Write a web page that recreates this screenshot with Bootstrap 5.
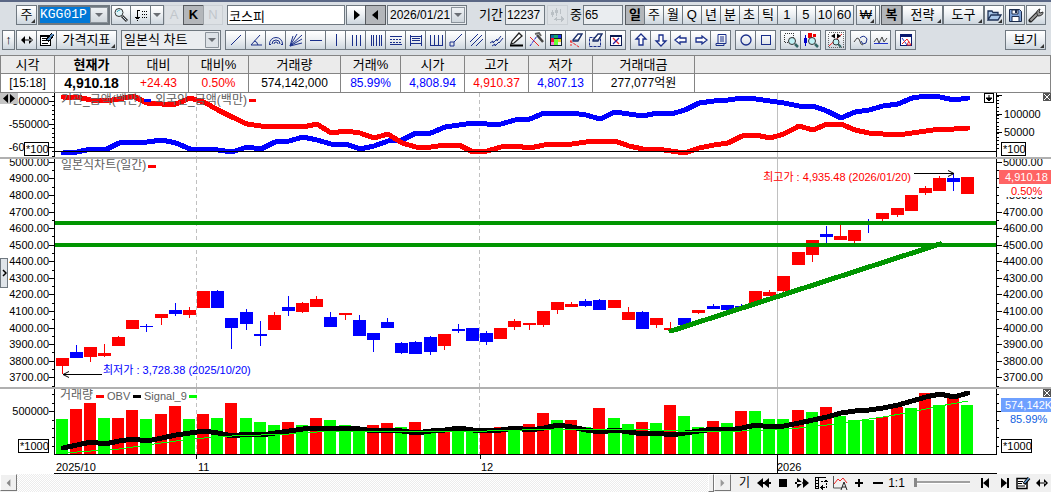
<!DOCTYPE html>
<html lang="ko">
<head>
<meta charset="utf-8">
<meta name="viewport" content="width=device-width, initial-scale=1">
<title>코스피 차트</title>
<link href="https://cdn.jsdelivr.net/npm/bootstrap@5.3.0/dist/css/bootstrap.min.css" rel="stylesheet">
<style>
body{font-family:"Liberation Sans","Noto Sans CJK KR",sans-serif;font-size:12px;line-height:16px;color:#000;background:#fff;overflow-x:hidden}
.tools{background:#dadfe4;border-top:2px solid #5a6785;padding:3px 5px 5px 0}
.bar{height:20px}
.bar + .bar{margin-top:5px}
.bar-a{padding-left:16px}
.bar-b{padding-left:2px}
.s1{margin-left:1px}.s2{margin-left:2px}.s4{margin-left:4px}.s12{margin-left:12px}
.grp{display:flex;flex:none}
.grp > * + *{margin-left:-1px}
.tb{--bs-btn-padding-x:0;--bs-btn-padding-y:0;--bs-btn-font-size:13px;--bs-btn-line-height:18px;--bs-btn-border-radius:0;--bs-btn-color:#000;--bs-btn-border-color:#6f7880;--bs-btn-hover-border-color:#6f7880;
 width:21px;height:20px;flex:none;display:flex;align-items:center;justify-content:center;position:relative;background:linear-gradient(#fff 5%,#eef1f4 45%,#cdd6de);white-space:nowrap}
.tb.slim{width:20px}.tb.wide{width:41px}.tb.ind{width:61px}.tb.nar{width:14px}.tb.sliver{width:5px}.tb.up{width:13px}
.tb.on{background:#b3b6ba;border-color:#55595e;font-weight:700}
.tb.dim{background:#dfe3e7;border-color:#c3c8cd;color:#b4b9be;--bs-btn-color:#b4b9be}
.tb.more::after{content:"";position:absolute;right:1px;bottom:1px;border:2px solid #333;border-top-color:transparent;border-left-color:transparent}
.tb svg,.ft svg{width:16px;height:16px;display:block}
.tx{height:20px;border:1px solid #6f7880;border-radius:0;padding:0 1px;font-size:12px;line-height:18px;min-height:0;flex:none;color:#000}
.tx.form-control:focus{box-shadow:none}
.soft{background:#eaedf0}
.name-in{width:118px;font-size:13px}
.num-in{width:40px}
.combo{border:2px solid #6f7880;height:20px;width:72px;background:#fff;flex:none;display:flex}
.combo input{width:50px;border:0;padding:0;background:#0078d7;color:#fff;font:13px/16px "Liberation Mono",monospace;outline:0}
.combo button,.arrow{border:1px solid #8b939b;background:linear-gradient(#eef1f4,#cfd6dc);padding:0;flex:1;display:flex;align-items:center;justify-content:center}
.tri{border:4px solid transparent;border-top-color:#6a6e74;border-bottom:0}
.date{width:80px;border:1px solid #6f7880;background:#eaedf0;height:20px;flex:none;display:flex;padding:1px}
.date input{width:62px;border:0;padding:0 1px;background:transparent;font-size:12px;line-height:16px}
.kind{width:100px;border:1px solid #6f7880;height:20px;background:#eaedf0 url("data:image/svg+xml,%3Csvg xmlns='http://www.w3.org/2000/svg' width='14' height='16'%3E%3Cpath d='M.5.5h13v15H.5z' fill='%23dde2e7' stroke='%238b939b'/%3E%3Cpath d='M3 6h8l-4 4z' fill='%236a6e74'/%3E%3C/svg%3E") no-repeat right 1px center;border-radius:0;padding:0 16px 0 2px;font-size:13px;line-height:18px;appearance:none;word-break:keep-all}
.lb{font-size:13px;line-height:20px;flex:none}
.quote{table-layout:fixed;width:100%;margin:0;border-collapse:collapse;text-align:center}
.quote th,.quote td{border:1px solid #848484;padding:0;height:18px;line-height:17px;white-space:nowrap;overflow:hidden}
.quote th{background:#ebebeb;font-weight:400;font-size:13px}
.quote td{height:19px;font-size:12px;background:#fff}
.quote .now{font-weight:700}
.quote td.now{font-size:14px}
.rd{color:#f00}.bl{color:#00f}
.pane{display:block;width:100%;overflow:hidden}
.pane text{font-size:11px}
.p1{height:64px}.p2{height:228px}.p3{height:85px}
.split{height:2px;background:#b0b0b0}
.stack{position:relative}
.handle{position:absolute;left:0;top:165px;width:8px;height:30px;border:1px solid #6f7880;background:#dfe4e9;padding:0;display:flex;align-items:center;justify-content:center}
.lr{position:absolute;left:0;top:0;width:18px;height:11px;background:#c4c4c4;border:0;padding:0;display:flex;align-items:center;justify-content:center}
.ft{height:18px;background:#f0f0f0}
.scroll-x{flex:1;background:repeating-conic-gradient(#fff 0 25%,#ececec 0 50%) 0 0/2px 2px}
.sb{width:17px;height:17px;border:1px solid;border-color:#fff #777 #777 #fff;background:#f0f0f0;padding:0;display:flex;align-items:center;justify-content:center}
.thumb{width:6px;border:1px solid;border-color:#fff #777 #777 #fff}
.ft .ib{border:0;background:none;padding:0;width:19px;height:18px;display:flex;align-items:center;justify-content:center;font-size:12px;color:#000}
.range{appearance:none;background:transparent;width:56px;height:16px;margin:0 5px 0 8px}
.range::-webkit-slider-runnable-track{height:3px;background:#a0a0a0;border-bottom:1px solid #fff}
.range::-webkit-slider-thumb{appearance:none;width:3px;height:9px;margin-top:-3px;background:#888}
</style>
</head>
<body>
<header class="tools">
<div class="bar bar-a d-flex">
 <button class="btn tb more">주</button>
 <div class="combo s1"><input id="code" aria-label="종목코드" value="KGG01P"><button aria-label="코드 목록"><span class="tri"></span></button></div>
 <div class="grp s1">
  <button class="btn tb slim" aria-label="찾기"><svg viewBox="0 0 16 16"><circle cx="6" cy="5.500" r="4" fill="#dff3f8" stroke="#333"/><path d="M4 5q1-2 3-2" stroke="#3ab" fill="none"/><path d="M9 9l5 5" stroke="#333" stroke-width="3"/><path d="M9.500 9.500l4 4" stroke="#cde"/></svg></button>
  <button class="btn tb" aria-label="정렬"><svg viewBox="0 0 16 16" shape-rendering="crispEdges"><path d="M7 3.500H4.500V12M2 10.500h5M3 11.500h3M4 13h1" stroke="#000" fill="none"/><path d="M9 4.500h1m1 0h4M9 7.500h1m1 0h4M9 10.500h1m1 0h4" stroke="#000" stroke-dasharray="1 1"/></svg></button>
  <button class="btn tb nar" aria-label="정렬 목록"><span class="tri"></span></button>
 </div>
 <div class="grp"><button class="btn tb dim slim" disabled>A</button><button class="btn tb on">K</button><button class="btn tb dim slim" disabled>N</button></div>
 <input class="form-control tx name-in s4" aria-label="종목명" value="코스피">
 <div class="grp s1"><button class="btn tb slim" aria-label="다음"><svg viewBox="0 0 16 16"><path d="M6 3v10l6-5z"/></svg></button><button class="btn tb on" aria-label="이전"><svg viewBox="0 0 16 16"><path d="M10 3v10l-6-5z"/></svg></button></div>
 <div class="date s1"><input aria-label="날짜" value="2026/01/21"><button class="arrow" aria-label="달력"><span class="tri"></span></button></div>
 <label class="lb s12" for="span">기간</label>
 <input class="form-control tx soft num-in s2" id="span" value="12237">
 <button class="btn tb dim s2" disabled aria-label="조정"><svg viewBox="0 0 16 16" shape-rendering="crispEdges"><path d="M3.500 3v7M7.500 1v8M11.500 2v5M5 12.500h10" stroke="#aab0b5"/><path d="M2 5h3v3H2zM6 3h3v3H6zM5 12l3-3v6zM15 12l-3-3v6z" fill="#aab0b5"/></svg></button>
 <label class="lb s2" for="cnt">중</label>
 <input class="form-control tx soft num-in s1" id="cnt" value="65">
 <div class="grp s2">
  <button class="btn tb slim on">일</button><button class="btn tb slim">주</button><button class="btn tb slim">월</button><button class="btn tb slim">Q</button><button class="btn tb slim">년</button><button class="btn tb slim">분</button><button class="btn tb slim">초</button><button class="btn tb slim">틱</button><button class="btn tb slim">1</button><button class="btn tb slim">5</button><button class="btn tb slim">10</button><button class="btn tb slim">60</button>
 </div>
 <div class="grp s2"><button class="btn tb slim more">₩</button><button class="btn tb sliver" aria-label="구분"></button></div>
 <div class="d-flex ms-auto">
  <button class="btn tb on">복</button><button class="btn tb wide more">전략</button><button class="btn tb wide more">도구</button>
  <button class="btn tb slim more" aria-label="열기"><svg viewBox="0 0 16 16"><path d="M2 13V4h4l1 1.500h5V8M2 13l3-5h10l-3 5z" fill="#a9c6e8" stroke="#1d3156" stroke-width="1.300"/></svg></button>
  <button class="btn tb slim s1" aria-label="저장"><svg viewBox="0 0 16 16"><path d="M2.500 2.500h10l2 2v10h-12z" fill="#7fa3d8" stroke="#1d2c4c"/><path d="M5 3h6v4H5zM5 9.500h7v5H5z" fill="#fff" stroke="#1d2c4c"/><path d="M8 3h2v3H8z" fill="#1d2c4c"/></svg></button>
  <button class="btn tb slim s1" aria-label="설정"><svg viewBox="0 0 16 16"><path d="M2.500 13.500L10 6" stroke="#222" stroke-width="4" stroke-linecap="round"/><path d="M2.500 13.500L10 6" stroke="#999" stroke-width="2"/><path d="M9 7q-1-4 3-5l-1 3 1 1 3-1q0 4-5 4z" fill="#999" stroke="#333"/></svg></button>
 </div>
</div>

<div class="bar bar-b d-flex">
 <button class="btn tb up">↑</button>
 <div class="grp s1">
  <button class="btn tb" aria-label="좌우"><svg viewBox="0 0 16 16"><path d="M6 4v8L2 8zM10 4v8l4-4zM3 7.500h10v1H3z"/></svg></button>
  <button class="btn tb" aria-label="편집"><svg viewBox="0 0 16 16" shape-rendering="crispEdges"><path d="M1.500 3.500h10v10h-10z" fill="#fff" stroke="#000"/><path d="M1 3.500h9" stroke="#000" stroke-width="2"/><path d="M3 6.500h5M3 8.500h4M3 11.500h6" stroke="#000"/><path d="M14 2L8 9" stroke="#000" stroke-width="4"/><path d="M14 2L9 8" stroke="#58b" stroke-width="2"/></svg></button>
  <button class="btn tb ind more">가격지표</button>
 </div>
 <select class="kind s4" aria-label="차트 종류"><option>일본식 차트</option></select>
 <div class="grp s4" id="draw"></div>
 <div class="grp s4" id="arrows"></div>
 <div class="grp s4" id="shapes"></div>
 <div class="grp s4" id="zooms"></div>
 <div class="grp s4" id="fit"></div>
 <div class="grp s4" id="waves"></div>
 <div class="grp s4" id="clear"></div>
 <button class="btn tb wide more ms-auto">보기</button>
</div>
</header>

<table class="quote">
<colgroup><col style="width:54px"><col style="width:74px"><col style="width:60px"><col style="width:60px"><col style="width:92px"><col style="width:60px"><col style="width:64px"><col style="width:64px"><col style="width:64px"><col style="width:102px"><col></colgroup>
<thead><tr><th>시각</th><th class="now">현재가</th><th>대비</th><th>대비%</th><th>거래량</th><th>거래%</th><th>시가</th><th>고가</th><th>저가</th><th>거래대금</th><th></th></tr></thead>
<tbody><tr><td>[15:18]</td><td class="now">4,910.18</td><td class="rd">+24.43</td><td class="rd">0.50%</td><td>574,142,000</td><td class="bl">85.99%</td><td class="bl">4,808.94</td><td class="rd">4,910.37</td><td class="bl">4,807.13</td><td>277,077억원</td><td></td></tr></tbody>
</table>

<main class="stack">
 <svg class="pane p1" id="flow"></svg>
 <div class="split"></div>
 <svg class="pane p2" id="price"></svg>
 <div class="split"></div>
 <svg class="pane p3" id="volume"></svg>
 <button class="lr" aria-label="폭 조절"><svg width="14" height="9" viewBox="0 0 14 9"><path d="M6 0v9L1 4.500zM8 0v9l5-4.500z"/></svg></button>
 <button class="handle" aria-label="펼치기"><svg width="5" height="8" viewBox="0 0 5 8"><path d="M1 1l3 3-3 3" fill="none" stroke="#000" stroke-width="1.500"/></svg></button>
</main>

<footer class="ft d-flex">
 <button class="sb" aria-label="왼쪽으로"><svg viewBox="0 0 16 16"><path d="M10 4v8L6 8z" fill="#888"/></svg></button>
 <div class="scroll-x"></div>
 <div class="thumb"></div>
 <button class="sb" aria-label="오른쪽으로"><svg viewBox="0 0 16 16"><path d="M6 4v8l4-4z" fill="#999"/></svg></button>
 <div class="d-flex ms-1">
  <button class="ib">기</button>
  <button class="ib" aria-label="뒤로"><svg viewBox="0 0 16 16"><path d="M7 3v10L1 8zM13 3v10L7 8zM7 7h8v2H7z"/></svg></button>
  <button class="ib" aria-label="정지"><svg viewBox="0 0 16 16"><path d="M4 4h8v8H4z"/></svg></button>
  <button class="ib" aria-label="앞으로"><svg viewBox="0 0 16 16"><path d="M9 3v10l6-5zM3 3v10l6-5zM1 7h8v2H1z"/></svg></button>
  <button class="ib" aria-label="축 이동"><svg viewBox="0 0 16 16" shape-rendering="crispEdges"><path d="M2.500 2v12M5.500 2v12M2 2.500h11M2 5.500h4M2 8.500h4M2 11.500h4M2 13.500h4" stroke="#000" fill="none"/><path d="M8 6.500h5v6H8" fill="none" stroke="#000" stroke-dasharray="2 1"/><path d="M10 10v5l-3-2.500zM10.500 7h5L13 4z"/></svg></button>
  <button class="ib" aria-label="자동 추세"><svg viewBox="0 0 16 16"><path d="M1.500 1v12H10" fill="none" stroke="#555"/><path d="M2 9l4-5 2 2 3-3 4 5" fill="none" stroke="#e22"/><path d="M9 15l3-8 3 8M10 12h4" fill="none" stroke="#222"/></svg></button>
  <button class="ib" aria-label="확대"><svg viewBox="0 0 16 16"><path d="M4 7h8v2H4zM7 4h2v8H7z"/></svg></button>
  <button class="ib" aria-label="축소"><svg viewBox="0 0 16 16"><path d="M3 7h10v2H3z"/></svg></button>
  <button class="ib">1:1</button>
  <input class="range" type="range" min="0" max="100" value="0" aria-label="배율">
 </div>
 <div class="d-flex">
  <button class="ib" aria-label="처음"><svg viewBox="0 0 16 16"><path d="M4 3h2v10H4zM12 3v10L6 8z"/></svg></button>
  <button class="ib" aria-label="끝"><svg viewBox="0 0 16 16"><path d="M11 3h2v10h-2zM5 3v10l6-5z"/></svg></button>
  <button class="ib" aria-label="편집"><svg viewBox="0 0 16 16"><path d="M2 3.500h10v10H2z" fill="#fff" stroke="#000" stroke-width="1.500"/><path d="M3 6.500h5M3 8.500h4M3 11h7" stroke="#000"/><path d="M14 3L9 9" stroke="#000" stroke-width="3.500"/><path d="M14 3L9.500 8" stroke="#69c" stroke-width="1.500"/></svg></button>
  <button class="ib" aria-label="너비"><svg viewBox="0 0 16 16"><path d="M6 4v8L2 8zM10 4v8l4-4zM4 7.500h8v1H4z"/></svg></button>
 </div>
</footer>

<script src="https://cdn.jsdelivr.net/npm/bootstrap@5.3.0/dist/js/bootstrap.bundle.min.js"></script>
<script>
// Toolbar glyphs, one list per button group: [label, svg body]
const N='fill="none" stroke="#1a2f8a"', C='shape-rendering="crispEdges"';
const lens='<circle cx="9" cy="9" r="3.500" fill="#bff0f4" stroke="#333"/><path d="M12 12l3 3" stroke="#366" stroke-width="2.500"/>';
const eraser='<path d="M5 8l5-6h4l-4 7H5z" fill="#fff" stroke="#1a2f6a" stroke-width="1.300"/><path d="M5 8h5l4-6" fill="none" stroke="#1a2f6a"/>';
const sets={
 draw:[
 ['추세선',`<path d="M3 13L13 3" ${N}/>`],
 ['각도선',`<path d="M12 3L3 13H14M6 9q3 0 4 4" ${N}/>`],
 ['원호',`<path d="M1.500 12a6.500 6.500 0 0 1 13 0M4 12a4 4 0 0 1 8 0M6 12a2 2 0 0 1 4 0M1 12.500h2M13 12.500h2" ${N}/>`],
 ['부채선',`<path d="M2 14L5 4M2 14L9 2M2 14L14 3M2 14L14 7M2 14L14 11" ${N}/>`],
 ['수평선',`<path d="M2 8.500h12" ${N} ${C}/>`],
 ['수직선',`<path d="M8.500 2v12" ${N} ${C}/>`],
 ['삼등분',`<path d="M4.500 3v11M8.500 3v11M12.500 3v11" ${N} ${C}/>`],
 ['시간대',`<path d="M3.500 3v11M5.500 3v11M8.500 3v11M11.500 3v11M13.500 3v11" ${N} ${C}/>`],
 ['되돌림',`<path d="M2 4.500h12M2 12.500h12" ${N} ${C}/><path d="M2 7.500h12M2 10.500h12" ${N} ${C} stroke-dasharray="2 1"/>`],
 ['구간',`<path d="M2.500 3v11M13.500 3v11M3 4.500h10M4 6.500h8M4 8.500h8M3 11.500h10" ${N} ${C}/>`],
 ['주기',`<path d="M2.500 3v10M6.500 3v10M10.500 3v10M14.500 3v10M2 13.500h13" ${N} ${C}/>`],
 ['점선분',`<path d="M6 10l8-8M2 10h4v4H2z" ${N}/>`],
 ['평행선',`<path d="M2 10l8-8M3 14L14 3M8 14l7-7" ${N}/>`],
 ['물결선',`<path d="M2 11l3-2v2l4-4v2l4-5M4 14l3-2v2l4-4v1l4-5" ${N}/>`],
 ['연필',`<path d="M3 12l1-3 7-8 3 3-8 7z" fill="#fff" stroke="#222" stroke-width="1.300"/><path d="M2 13.500h13" stroke="#000" stroke-width="2"/>`],
 ['도구',`<path d="M2 5l9 9" stroke="#e22"/><path d="M2 14L9 4" stroke="#22c" stroke-dasharray="3 1"/><path d="M9 3l6 7" stroke="#444" stroke-width="2.500"/><path d="M7 2l4-1 2 3" stroke="#666" stroke-width="2" fill="none"/>`],
 ['색상',`<g ${C}><path d="M2 2h12v12H2z" fill="#123"/><path d="M3 3h3v3H3z" fill="#16a"/><path d="M6 3h4v3H6z" fill="#1a6"/><path d="M10 3h3v3h-3z" fill="#23e"/><path d="M3 6h3v4H3z" fill="#e13"/><path d="M6 7h4v6H6z" fill="#6f3"/><path d="M10 7h3v3h-3z" fill="#ec3"/><path d="M3 10h3v3H3z" fill="#f7d"/><path d="M10 10h3v3h-3z" fill="#eee"/></g>`],
 ['지우개',`${eraser}<path d="M2 9l9 6M3 8v6" stroke="#e22" stroke-dasharray="3 1"/>`],
 ['영역삭제',`<path d="M1.500 5.500h11v9h-11z" ${N} stroke-dasharray="3 1"/>${eraser}`],
 ['모두삭제',`<g ${C}><path d="M2.500 3.500h11v10h-11z" fill="#fff" stroke="#0a1a50"/><path d="M2 3.500h12" stroke="#0a1a50" stroke-width="2"/></g><path d="M5 6l6 6" stroke="#e22" stroke-width="1.300"/><path d="M5 12l6-6" stroke="#22a" stroke-width="1.300"/>`]],
 arrows:[
 ['위',`<path d="M8 2l5 5h-3v6H6V7H3z" fill="#fff" stroke="#1a2f8a" stroke-width="1.300"/>`],
 ['아래',`<path d="M8 14l5-5h-3V3H6v6H3z" fill="#fff" stroke="#1a2f8a" stroke-width="1.300"/>`],
 ['왼쪽',`<path d="M2 8l5-4v2h6v4H7v2z" fill="#fff" stroke="#1a2f8a" stroke-width="1.300"/>`],
 ['오른쪽',`<path d="M14 8L9 4v2H3v4h6v2z" fill="#fff" stroke="#1a2f8a" stroke-width="1.300"/>`],
 ['메모',`<path d="M5 2.500h8v9H5zM3 13.500h8v-2H3zM7 5h4M7 7h4M7 9h4" ${N}/>`]],
 shapes:[['원',`<circle cx="8" cy="8" r="5" ${N} stroke-width="1.300"/>`],['사각형',`<path d="M3.500 3.500h9v9h-9z" ${N} ${C}/>`]],
 zooms:[['영역확대',`<path d="M1.500 1.500h9v9h-9z" fill="none" stroke="#333" stroke-dasharray="1 1" ${C}/>${lens}`],['봉확대',`<g ${C}><path d="M1 6h3v5H1zM2 3h1v11H2z" fill="#00c"/><path d="M5 1h4v5H5zM10 2h3v3h-3z" fill="#e00"/></g>${lens}`]],
 fit:[['맞춤',`<path d="M.500.500h15v15H.500z" fill="none" stroke="#666" stroke-dasharray="1 1" ${C}/><path d="M1 14L14 2" stroke="#e22"/><path d="M7 1.500v5L3 4zM9 1.500v5L13 4z"/><circle cx="8" cy="10" r="3" fill="#bff0f4" stroke="#333"/><path d="M10 12l3 3" stroke="#366" stroke-width="2"/>`]],
 waves:[['파동',`<path d="M1 10l3-4 2 1 2 5 2 1" fill="none" stroke="#444"/><path d="M7 6q4-4 7 1l-1 4-3 1-2-3" ${N}/>`],['진동',`<path d="M1 10l3-4 2 5 3-6 2 5 3-4" fill="none" stroke="#444"/><path d="M1 11.500h14" stroke="#23c"/>`]],
 clear:[['차트',`<g ${C}><path d="M2.500 2.500h11v11h-11z" fill="#fff" stroke="#0a1a70"/><path d="M2 3.500h12" stroke="#0a1a70" stroke-width="3"/></g><path d="M4 6l5 7" stroke="#23c"/><path d="M4 12l5-5 4 6H9l2-4" fill="none" stroke="#e22"/>`]]
};
for(const id in sets) document.getElementById(id).innerHTML=sets[id].map(([t,g])=>`<button class="btn tb" aria-label="${t}"><svg viewBox="0 0 16 16">${g}</svg></button>`).join('');

// Sessions: colour, body top, body bottom, high, low (vertical positions on the shared scale)
const candles='r358,366,358,374 b352,358,345,358 r347,357,347,362 r353,356,344,357 r337,346,336,346 r320,329,320,329 b326,327,324,332 r314,318,314,325 b310,314,303,316 r310,315,307,318 r291,308,291,308 b291,308,290,308 b318,328,318,349 b312,324,309,330 b334,336,321,346 r315,330,312,330 b307,311,296,316 r303,312,302,313 r299,307,296,307 b317,327,312,327 r313,315,313,320 b320,336,315,336 b333,340,333,352 b322,328,318,328 b343,353,342,354 b342,354,341,354 b337,352,336,355 r334,346,334,350 b329,331,324,333 b328,341,328,341 b333,342,331,345 r328,339,328,339 r321,327,319,330 r323,325,323,330 r311,325,311,327 r302,310,302,314 r304,307,302,307 b301,306,299,307 b300,310,299,310 r300,308,300,308 r312,320,307,320 b312,329,311,329 r318,325,318,328 r328,330,322,330 b318,325,318,325 r310,313,310,314 b306,309,304,309 b305,310,305,310 b306,307,304,309 r291,304,291,304 r292,296,290,296 r276,291,276,292 r252,265,252,265 r240,255,240,262 b234,237,226,244 r236,240,225,240 r230,241,230,243 b222,225,219,233 r213,219,213,221 r208,215,208,217 r195,211,195,211 r188,193,186,195 r178,191,176,191 b178,182,174,191 r177,194,177,194'.split(' ').map(s=>[s[0],...s.slice(1).split(',').map(Number)]);
const vol='g419 r409 r403 g418 r418 r410 g419 r414 r406 g419 r414 g418 r403 g418 g422 g425 r422 g425 r418 g420 g425 g427 r425 r423 g427 r422 g431 r431 g430 g430 r428 r427 g431 r424 r413 g420 r420 g427 r408 g418 g424 r422 g423 r405 g416 g427 r421 g423 r411 g411 g419 g419 r410 g412 r407 g416 g420 g420 r417 r407 g408 r393 g405 r398 g405'.split(' ');
const inst=[153,152,149,150,143,142,142,140,143,149,149,150,152,147,149,142,141,137,140,144,144,149,146,141,140,133,133,127,125,123,124,124,120,119,113,113,113,115,119,112,114,116,113,114,110,103,101,100,98,99,101,103,106,106,111,118,112,110,106,104,98,96,97,100,98];
const frgn=[97,97,100,101,99,96,103,104,104,98,102,110,117,124,126,126,126,127,124,133,131,133,138,134,143,147,147,145,145,152,151,147,146,148,145,144,144,142,141,141,146,149,149,151,153,148,145,143,136,135,138,134,126,130,124,124,130,133,134,135,133,131,129,129,128];
const obv=[448,445,442,444,441,439,441,438,435,433,431,433,436,434,435,433,431,429,428,429,428,429,431,430,431,433,431,430,428,430,431,430,428,430,428,425,427,430,432,430,432,434,433,435,433,431,429,430,428,425,427,426,423,420,417,413,411,410,408,405,401,397,394,397,393];
const sig=[[0,453],[2,451],[4,449],[6,445],[8,441],[10,438],[12,436],[14,435],[16,434],[18,432],[20,431],[30,431],[35,429],[42,430],[45,432],[48,431],[50,430],[52,428],[54,425],[56,421],[58,417],[60,412],[62,406],[64,401]];
const RED='#f00',BLU='#00f',GRN='#0f0',DK='#009500';
const T=(x,y,s,f='#000',a='start',z=11)=>`<text x="${x}" y="${y}" fill="${f}" text-anchor="${a}" style="font-size:${z}px">${s}</text>`;
const R=(x,y,w,h,f)=>`<rect x="${x}" y="${y}" width="${w}" height="${h}" fill="${f}"/>`;
const boxed=(x,y,w,s)=>`<rect x="${x+.5}" y="${y+.5}" width="${w}" height="13" fill="#fff" stroke="#000"/>`+T(x+2,y+11,s);
const closer=(x,y)=>`<g>${R(x,y,8,8,'#555')}<path d="M${x+1} ${y+1}l6 6m0-6l-6 6" stroke="#fff"/></g>`;

function draw(){
 const W=document.querySelector('.stack').clientWidth, L=54, E=W-55, step=(E-L)/66.55;
 const X=i=>L+8.500+step*i, P=v=>Math.round(v);
 const line=(a,c,w)=>`<polyline points="${a.map((v,i)=>Array.isArray(v)?P(X(v[0]))+','+v[1]:P(X(i))+','+v).join(' ')}" fill="none" stroke="${c}" stroke-width="${w}" stroke-linecap="round" stroke-linejoin="round" shape-rendering="crispEdges"/>`;
 const months=(t,b)=>[9.5,29.5].map(i=>`<path d="M${P(X(i))-.5} ${t}V${b}" stroke="#c0c0c0" stroke-dasharray="4 3"/>`).join('')+R(P(X(50.5)),t,1,b-t,'#c0c0c0');
 const axes=(t,b)=>R(L,t,1,b-t,'#000')+R(E,t,1,b-t,'#000');
 const tick=(y,l,side)=>side?R(E+1,P(y),l,1,'#000'):R(L-l,P(y),l,1,'#000');
 const put=(id,top,h,s)=>{const e=document.getElementById(id);e.setAttribute('viewBox',`0 ${top} ${W} ${h}`);e.innerHTML=s};
 let s=months(93,157)+line(inst,BLU,5)+line(frgn,RED,5)+R(L,151,E-L,1,'#000')+axes(93,157);
 for(let y=96;y<156;y+=4.6) s+=tick(y,2,0);
 for(let y=96;y<150;y+=3.7) s+=tick(y,2,1);
 [[101,'-500000'],[124,'-550000'],[147,'-600000']].forEach(([y,t])=>s+=tick(y,5,0)+T(49,y+4,t,'#000','end'));
 [[95,''],[114,'100000'],[132,'50000']].forEach(([y,t])=>s+=tick(y,5,1)+T(E+8,y+4,t));
 s+=boxed(24,142,24,'*100')+boxed(E+5,142,24,'*100');
 s+=T(61,104,'기관_금액(백만)','#606060','start',12)+R(144,99,7,3,BLU)+T(155,104,'외국인_금액(백만)','#606060','start',12)+R(249,99,7,3,RED);
 s+=`<rect x="${E-11.5}" y="93.500" width="9" height="9" fill="#fff" stroke="#000"/><path d="M${E-7} 95v4m-3-1h6l-3 3z" stroke="#000"/>`+closer(W-8,93);
 put('flow',93,64,s);

 const Y=v=>377.3-(v-3700)*.1658;
 s=months(159,387);
 candles.forEach(([c,a,b,h,l],i)=>{const f=c=='r'?RED:BLU,x=P(X(i));s+=R(x-7,a,13,b-a,f)+R(x-1,h,1,l-h,f)});
 s+=R(L,221,E-L,4,DK)+R(L,243,E-L,4,DK)+`<path d="M${P(X(43))} 331L${P(X(62))} 244" stroke="${DK}" stroke-width="5" stroke-linecap="round" shape-rendering="crispEdges"/>`+axes(159,387);
 for(let v=3700;v<=5000;v+=100){const y=Y(v);s+=tick(y,5,0)+tick(y,5,1)+T(49,P(y)+4,v+'.00','#000','end')+T(E+7,P(y)+4,v+'.00');if(v<5000)s+=tick(Y(v+50),2,0)+tick(Y(v+50),2,1)}
 s+=tick(386,2,0)+tick(386,2,1);
 s+=T(61,169,'일본식차트(일간)','#606060','start',12)+R(148,165,8,3,RED);
 s+=R(E+3,184,52,13,'#fff')+R(E+3,170,52,14,'#ff6464')+T(E+9,181,'4,910.18','#fff')+T(E+15,195,'0.50%',RED);
 const xa=P(X(63)),xl=P(X(0));
 s+=T(xa-43,181,'최고가 : 4,935.48 (2026/01/20)',RED,'end')+`<path d="M${xa-40} 173.500H${xa}m-6-3l6 3-6 3" fill="none" stroke="#000"/>`;
 s+=T(103,374,'최저가 : 3,728.38 (2025/10/20)',BLU)+`<path d="M102 374.500H${xl}m6-3l-6 3 6 3" fill="none" stroke="#000"/>`;
 put('price',159,228,s);

 s=months(389,454);
 vol.forEach((v,i)=>{const y=+v.slice(1);s+=R(P(X(i))-7,y,12,454-y,v[0]=='r'?RED:GRN)});
 s+=line(obv,'#000',5)+line(sig,GRN,1)+R(E,389,1,65,'#000')+R(L,389,1,65,'#000')+R(L,454,E-L+1,1,'#000')+R(L,473,E-L+1,1,'#000');
 [394,403,420,428,437,446].forEach(y=>s+=tick(y,2,0)+tick(y,2,1));
 s+=tick(411,5,0)+tick(411,5,1)+T(49,415,'500000','#000','end')+boxed(18,439,30,'*1000')+boxed(E+5,439,30,'*1000');
 s+=T(60,399,'거래량','#606060','start',12)+R(96,395,8,3,RED)+T(107,400,'OBV','#606060')+R(133,395,8,3,'#000')+T(144,400,'Signal_9','#606060')+R(189,395,8,3,GRN);
 s+=R(P(X(9.5))-1,454,1,5,'#000')+R(P(X(29.5)),454,1,5,'#000')+R(P(X(50.5)),454,1,19,'#000');
 s+=T(56,471,'2025/10')+T(P(X(9.5))+1,471,'11')+T(P(X(29.5))+1,471,'12')+T(P(X(50.5)),471,'2026');
 s+=R(E+5,398,50,14,'#6ea0ff')+T(E+9,409,'574,142K','#fff')+T(E+14,423,'85.99%','#1060e0')+closer(W-8,389);
 put('volume',389,85,s);
}
draw();addEventListener('resize',draw);
</script>
</body>
</html>
